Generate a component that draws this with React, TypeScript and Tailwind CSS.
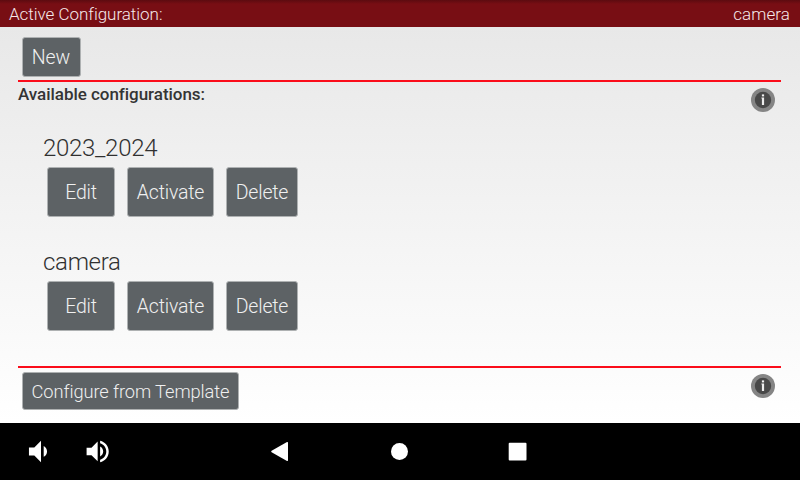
import React from "react";

const buttonBase =
  "flex items-center justify-center rounded-[3px] border border-[#aeb1b2] bg-[#5d6265] font-light text-[#f0f0f0] whitespace-nowrap";

function InfoIcon() {
  return (
    <svg className="block size-6" viewBox="0 0 24 24">
      <circle cx="12" cy="12" r="12" fill="#858585" />
      <circle cx="12" cy="12" r="8.2" fill="#484848" />
      <rect x="10.9" y="6.4" width="2.2" height="2" fill="#f2f2f2" />
      <path d="M10.4 9.6h2.7v7.4h-2.2v-6.4h-.5z" fill="#ececec" />
    </svg>
  );
}

function Configuration({ name }: { name: string }) {
  return (
    <section className="h-[114px] pl-[25px]">
      <h2 className="h-[30px] text-[24px] leading-[30px] font-light tracking-[-0.3px] text-[#303030]">{name}</h2>
      <div className="flex gap-3 pt-[4px] pl-1 text-[19.5px] tracking-[-0.2px]">
        <button className={`${buttonBase} h-[50px] w-[68px] pt-[2px]`}>Edit</button>
        <button className={`${buttonBase} h-[50px] w-[87px] pt-[2px]`}>Activate</button>
        <button className={`${buttonBase} h-[50px] w-[72px] pt-[2px]`}>Delete</button>
      </div>
    </section>
  );
}

function NavigationBar() {
  return (
    <nav className="flex h-[57px] items-center bg-black text-white">
      <svg className="h-[57px] w-full" viewBox="0 0 800 57" fill="currentColor">
        <path
          transform="translate(22.25 12.4) scale(1.34)"
          d="M18.5 12c0-1.77-1.02-3.29-2.5-4.03v8.05c1.48-.73 2.5-2.25 2.5-4.02zM5 9v6h4l5 5V4L9 9H5z"
        />
        <path
          transform="translate(82.9 13.7) scale(1.23)"
          d="M3 9v6h4l5 5V4L7 9H3zm13.5 3c0-1.77-1.02-3.29-2.5-4.03v8.05c1.48-.73 2.5-2.25 2.5-4.02zM14 3.23v2.06c2.89.86 5 3.54 5 6.71s-2.11 5.85-5 6.71v2.06c4.01-.91 7-4.49 7-8.77s-2.99-7.86-7-8.77z"
        />
        <path d="M287 19q1-.4 1 .7v17.6q0 1.1-1 .7l-15.4-8.8q-.9-.7 0-1.4z" />
        <circle cx="399.5" cy="28.5" r="8.5" />
        <rect x="508.7" y="19.7" width="17.8" height="17.8" rx="1" />
      </svg>
    </nav>
  );
}

export default function App() {
  return (
    <div className="flex h-[480px] w-[800px] flex-col overflow-hidden bg-black font-['Roboto',sans-serif]">
      <header className="flex h-[27px] items-center justify-between bg-[linear-gradient(#5c0b10,#780e14_4px,#780e14)] pt-[2px] pr-[10px] pl-[9px] text-[17px] font-light text-[#f5e8e9]">
        <span className="tracking-[-0.03px]">Active Configuration:</span>
        <span className="tracking-[0.1px]">camera</span>
      </header>
      <main className="flex h-[396px] flex-col bg-[linear-gradient(#e8e8e8,#ffffff)] pr-[19px] pl-[18px]">
        <div className="h-[53px] pt-[10px] pl-1">
          <button className={`${buttonBase} h-[40px] w-[59px] pt-[2px] pr-px text-[19.5px] tracking-[-0.1px]`}>New</button>
        </div>
        <div className="h-[2px] bg-[#fb0d1b]" />
        <div className="flex h-[51px] justify-between pr-[6px]">
          <h1 className="pt-[2px] text-[17px] leading-[21px] font-medium tracking-[-0.04px] text-[#343434]">Available configurations:</h1>
          <div className="pt-[6px]"><InfoIcon /></div>
        </div>
        <div className="h-[233px]">
          <Configuration name="2023_2024" />
          <Configuration name="camera" />
        </div>
        <div className="h-[2px] bg-[#fb0d1b]" />
        <div className="flex justify-between pt-[4px] pr-[6px] pl-1">
          <button className={`${buttonBase} h-[38px] w-[217px] pt-[2px] text-[18.3px] tracking-[-0.1px]`}>Configure from Template</button>
          <div className="pt-[2px]"><InfoIcon /></div>
        </div>
      </main>
      <NavigationBar />
    </div>
  );
}
